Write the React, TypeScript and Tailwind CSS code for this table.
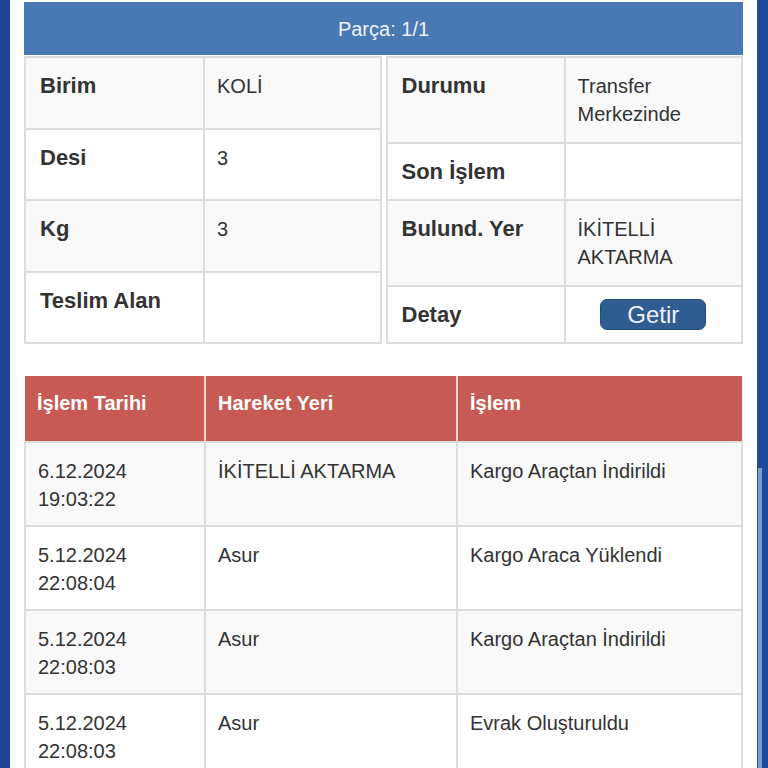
import React from 'react';

const font = { fontFamily: '"Liberation Sans", Arial, sans-serif' };

const leftRows = [
  { label: 'Birim', value: 'KOLİ' },
  { label: 'Desi', value: '3' },
  { label: 'Kg', value: '3' },
  { label: 'Teslim Alan', value: '' },
];

const moves = [
  { date: '6.12.2024', time: '19:03:22', place: 'İKİTELLİ AKTARMA', action: 'Kargo Araçtan İndirildi' },
  { date: '5.12.2024', time: '22:08:04', place: 'Asur', action: 'Kargo Araca Yüklendi' },
  { date: '5.12.2024', time: '22:08:03', place: 'Asur', action: 'Kargo Araçtan İndirildi' },
  { date: '5.12.2024', time: '22:08:03', place: 'Asur', action: 'Evrak Oluşturuldu' },
];

const labelCell = 'border-2 border-[#dddddd] align-top pl-[14px] pr-2 pt-[14px] text-[22px] leading-[28px] font-bold text-[#333333]';
const valueCell = 'border-2 border-[#dddddd] align-top pl-[12px] pr-2 pt-[14px] text-[20px] leading-[28px] text-[#333333]';
const bodyCell = 'border-2 border-[#dddddd] pl-[12px] pt-[14px] align-top text-[20px] leading-[28px] text-[#333333]';

const App = () => {
  return (
    <div className="flex h-[768px] overflow-hidden bg-white" style={font}>
      <div className="w-[10px] shrink-0 bg-[#1e4595]" />

      <div className="flex-1 px-[14px] pt-[2px]">
        <div className="flex h-[53px] items-center justify-center bg-[#4979b4] text-[20px] text-[#eef3fa]">
          Parça: 1/1
        </div>

        <div className="mt-[1px] grid grid-cols-2 gap-[4px]">
          <table className="h-[288px] w-full border-collapse border-2 border-[#dddddd]">
            <tbody>
              {leftRows.map((r, i) => (
                <tr key={r.label} className={i % 2 === 0 ? 'bg-[#f9f9f9]' : 'bg-white'}>
                  <td className={labelCell + ' w-[179px]'}>{r.label}</td>
                  <td className={valueCell}>{r.value}</td>
                </tr>
              ))}
            </tbody>
          </table>

          <table className="h-[288px] w-full border-collapse border-2 border-[#dddddd]">
            <tbody>
              <tr className="h-[86px] bg-[#f9f9f9]">
                <td className={labelCell + ' w-[178px]'}>Durumu</td>
                <td className={valueCell}>Transfer Merkezinde</td>
              </tr>
              <tr className="h-[57px] bg-white">
                <td className={labelCell}>Son İşlem</td>
                <td className={valueCell}></td>
              </tr>
              <tr className="h-[86px] bg-[#f9f9f9]">
                <td className={labelCell}>Bulund. Yer</td>
                <td className={valueCell}>İKİTELLİ AKTARMA</td>
              </tr>
              <tr className="h-[57px] bg-white">
                <td className={labelCell}>Detay</td>
                <td className="border-2 border-[#dddddd] pt-[12px] text-center align-top">
                  <button className="h-[31px] w-[106px] rounded-[7px] border border-[#24497a] bg-[#2f5d91] text-[24px] leading-[28px] text-[#eef3f9]">
                    Getir
                  </button>
                </td>
              </tr>
            </tbody>
          </table>
        </div>

        <table className="mt-[32px] w-full table-fixed border-collapse">
          <thead>
            <tr className="h-[66px] bg-[#c75b53] text-left text-[20px] font-bold leading-[28px] text-white">
              <th className="w-[180px] border-r-2 border-[#f1d2c6] pl-[12px] pt-[13px] align-top">İşlem Tarihi</th>
              <th className="w-[252px] border-r-2 border-[#f1d2c6] pl-[12px] pt-[13px] align-top">Hareket Yeri</th>
              <th className="pl-[12px] pt-[13px] align-top">İşlem</th>
            </tr>
          </thead>
          <tbody>
            {moves.map((m, i) => (
              <tr key={i} className={'h-[84px] ' + (i % 2 === 0 ? 'bg-[#f9f9f9]' : 'bg-white')}>
                <td className={bodyCell}>
                  {m.date}
                  <br />
                  {m.time}
                </td>
                <td className={bodyCell}>{m.place}</td>
                <td className={bodyCell}>{m.action}</td>
              </tr>
            ))}
          </tbody>
        </table>
      </div>

      <div className="flex w-[11px] shrink-0 flex-col bg-[#1f4a97]">
        <div className="h-[468px]" />
        <div className="flex flex-1">
          <div className="ml-[1px] w-[4px] bg-[#7b9bd1]" />
        </div>
      </div>
    </div>
  );
};

export default App;
